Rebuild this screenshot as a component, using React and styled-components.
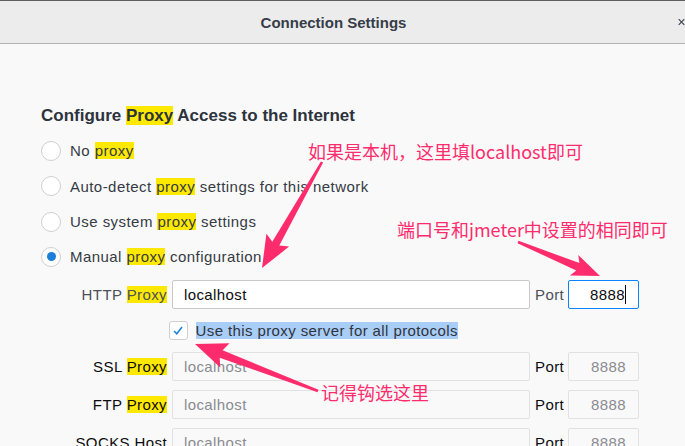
import styled, { createGlobalStyle } from "styled-components";

const GlobalStyle = createGlobalStyle`
  html, body {
    margin: 0;
    padding: 0;
    background: #f9f9fa;
  }
  body {
    font-family: "Liberation Sans", Arial, sans-serif;
  }
`;

const Window = styled.div`
  position: relative;
  width: 685px;
  height: 446px;
  overflow: hidden;
  background: #f9f9fa;
`;

const TitleBar = styled.div`
  display: flex;
  align-items: center;
  height: 42px;
  background: #ececec;
  border-top: 1px solid #5e5e5e;
  border-bottom: 1px solid #b3b3b3;
`;

const Title = styled.div`
  flex: 1;
  text-align: center;
  font-size: 15px;
  font-weight: 700;
  color: #363d48;
`;

const Close = styled.div`
  width: 18px;
  flex: none;
  display: flex;
  align-items: center;
  padding-left: 11px;
  box-sizing: border-box;
  overflow: visible;
`;

const Body = styled.div`
  padding: 54px 0 0 41px;
`;

const Heading = styled.div`
  height: 35.3px;
  display: flex;
  align-items: center;
  font-size: 17px;
  font-weight: 700;
  color: #2d333c;
`;

const Mark = styled.span`
  background: #ffe900;
`;

const RadioList = styled.div`
  display: flex;
  flex-direction: column;
`;

const RadioRow = styled.div`
  height: 35.3px;
  display: flex;
  align-items: center;
  gap: 9px;
  font-size: 15px;
  letter-spacing: 0.45px;
  color: #363b43;
`;

const Radio = styled.div`
  width: 20px;
  height: 20px;
  box-sizing: border-box;
  border-radius: 50%;
  border: 1px solid #cfcfd2;
  background: #ffffff;
  display: flex;
  align-items: center;
  justify-content: center;

  &::after {
    content: "";
    width: 9px;
    height: 9px;
    border-radius: 50%;
    background: ${(p) => (p.$checked ? "#1b7fd8" : "transparent")};
  }
`;

const ProxyGrid = styled.div`
  display: grid;
  grid-template-columns: 131px 358px 38px 71px;
  grid-template-rows: 29px 25px 29px 29px 29px;
  row-gap: 9px;
  margin-top: 5.4px;
  font-size: 15px;
  letter-spacing: 0.4px;
`;

const FieldLabel = styled.div`
  display: flex;
  align-items: center;
  justify-content: flex-end;
  padding-right: 5px;
  white-space: nowrap;
  color: ${(p) => (p.$muted ? "#4b5059" : "#0c0c0d")};
`;

const PortLabel = styled.div`
  display: flex;
  align-items: center;
  padding-left: 5px;
  color: ${(p) => (p.$muted ? "#4b5059" : "#0c0c0d")};
`;

const TextBox = styled.div`
  box-sizing: border-box;
  height: 29px;
  display: flex;
  align-items: center;
  justify-content: ${(p) => (p.$right ? "flex-end" : "flex-start")};
  padding: ${(p) => (p.$right ? "0 12px 0 0" : "0 0 0 11px")};
  border-radius: 2px;
  border: 1px solid
    ${(p) => (p.$focused ? "#0a84ff" : p.$disabled ? "#e1e1e3" : "#c9c9cc")};
  background: ${(p) => (p.$disabled ? "#f9f9fa" : "#ffffff")};
  color: ${(p) => (p.$disabled ? "#8b8b91" : "#0c0c0d")};
  font-size: 15px;
  white-space: nowrap;
  overflow: hidden;
`;

const Caret = styled.span`
  display: inline-block;
  width: 1px;
  height: 19px;
  background: #0c0c0d;
`;

const CheckRow = styled.div`
  grid-column: 2 / 5;
  display: flex;
  align-items: center;
  gap: 8px;
  margin-left: -3.5px;
`;

const CheckBox = styled.div`
  width: 19px;
  height: 19px;
  box-sizing: border-box;
  border: 1px solid #cfcfd2;
  border-radius: 3px;
  background: #ffffff;
  display: flex;
  align-items: center;
  justify-content: center;
`;

const Selected = styled.span`
  background: #a8cdf6;
  color: #2f343c;
  font-size: 15px;
`;

const Overlay = styled.svg`
  position: absolute;
  left: 0;
  top: 0;
  width: 685px;
  height: 446px;
  pointer-events: none;
`;

const Note = styled.span`
  position: absolute;
  left: ${(p) => p.$x}px;
  top: ${(p) => p.$y}px;
  font-family: "Noto Sans CJK SC", sans-serif;
  font-size: 18px;
  line-height: 20px;
  color: #fe2c6c;
  white-space: nowrap;
`;

function arrowPoints(tail, tip, hl, hw, tw = 1.3, sw = 4) {
  const dx = tip[0] - tail[0];
  const dy = tip[1] - tail[1];
  const len = Math.hypot(dx, dy);
  const ux = dx / len;
  const uy = dy / len;
  const nx = -uy;
  const ny = ux;
  const neck = [tip[0] - ux * hl, tip[1] - uy * hl];
  const back = [tip[0] - ux * (hl + 4), tip[1] - uy * (hl + 4)];
  const pts = [
    [tail[0] + nx * tw, tail[1] + ny * tw],
    [neck[0] + nx * sw, neck[1] + ny * sw],
    [back[0] + nx * hw, back[1] + ny * hw],
    tip,
    [back[0] - nx * hw, back[1] - ny * hw],
    [neck[0] - nx * sw, neck[1] - ny * sw],
    [tail[0] - nx * tw, tail[1] - ny * tw],
  ];
  return pts.map((p) => p.map((v) => v.toFixed(1)).join(",")).join(" ");
}

const arrows = [
  { tail: [322, 162], tip: [262, 268], hl: 28, hw: 13 },
  { tail: [518, 242], tip: [600, 276], hl: 24, hw: 11 },
  { tail: [318, 391], tip: [195, 344], hl: 28, hw: 13 },
];

const rows = [
  { label: "No", rest: "", checked: false },
  { label: "Auto-detect", rest: "settings for this network", checked: false },
  { label: "Use system", rest: "settings", checked: false },
  { label: "Manual", rest: "configuration", checked: true },
];

const others = [
  { label: "SSL", mark: "Proxy" },
  { label: "FTP", mark: "Proxy" },
  { label: "SOCKS Host", mark: "" },
];

function App() {
  return (
    <Window>
      <GlobalStyle />
      <TitleBar>
        <Title>Connection Settings</Title>
        <Close>
          <svg width="10" height="10" viewBox="0 0 10 10">
            <path
              d="M1 1 L9 9 M9 1 L1 9"
              stroke="#3c4450"
              strokeWidth="1.6"
              fill="none"
            />
          </svg>
        </Close>
      </TitleBar>
      <Body>
        <Heading>
          <span>
            Configure <Mark>Proxy</Mark> Access to the Internet
          </span>
        </Heading>
        <RadioList>
          {rows.map((row) => (
            <RadioRow key={row.label}>
              <Radio $checked={row.checked} />
              <span>
                {row.label} <Mark>proxy</Mark>
                {row.rest ? " " + row.rest : ""}
              </span>
            </RadioRow>
          ))}
        </RadioList>
        <ProxyGrid>
          <FieldLabel $muted>
            <span>
              HTTP <Mark>Proxy</Mark>
            </span>
          </FieldLabel>
          <TextBox>localhost</TextBox>
          <PortLabel $muted>Port</PortLabel>
          <TextBox $right $focused>
            8888
            <Caret />
          </TextBox>
          <CheckRow>
            <CheckBox>
              <svg width="12" height="11" viewBox="0 0 12 11">
                <path
                  d="M2 6 L4.8 8.8 L10 2"
                  stroke="#1b7fd8"
                  strokeWidth="1.5"
                  fill="none"
                />
              </svg>
            </CheckBox>
            <Selected>Use this proxy server for all protocols</Selected>
          </CheckRow>
          {others.map((o) => (
            <>
              <FieldLabel key={o.label + "l"}>
                <span>
                  {o.label}
                  {o.mark ? " " : ""}
                  {o.mark ? <Mark>{o.mark}</Mark> : null}
                </span>
              </FieldLabel>
              <TextBox key={o.label + "h"} $disabled>
                localhost
              </TextBox>
              <PortLabel key={o.label + "p"}>Port</PortLabel>
              <TextBox key={o.label + "n"} $right $disabled>
                8888
              </TextBox>
            </>
          ))}
        </ProxyGrid>
      </Body>
      <Overlay viewBox="0 0 685 446">
        {arrows.map((a, i) => (
          <polygon
            key={i}
            points={arrowPoints(a.tail, a.tip, a.hl, a.hw)}
            fill="#fe2c6c"
          />
        ))}
      </Overlay>
      <Note $x={308} $y={141}>如果是本机，这里填localhost即可</Note>
      <Note $x={397} $y={219}>端口号和jmeter中设置的相同即可</Note>
      <Note $x={321} $y={382}>记得钩选这里</Note>
    </Window>
  );
}

export default App;
